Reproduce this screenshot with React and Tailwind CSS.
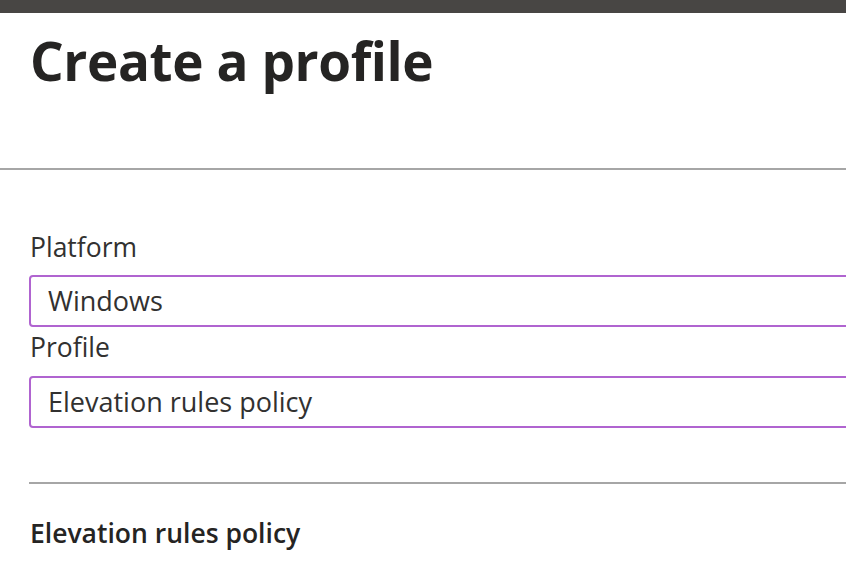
export default function App() {
  const font = { fontFamily: '"Open Sans", "Noto Sans", sans-serif' };
  return (
    <div className="w-[846px] h-[564px] overflow-hidden bg-white text-[#323130]" style={font}>
      <div className="h-[13px] bg-[#484644]" />
      <h1 className="mt-[21px] px-[30px] text-[53px] leading-[54px] font-bold text-[#252423] whitespace-nowrap tracking-[-0.4px]">
        Create a profile
      </h1>
      <div className="mt-[80px] h-[2px] bg-[#a6a6a6]" />
      <div className="pl-[29px] mr-[-60px]">
        <div className="mt-[59px] pl-px text-[26.5px] leading-[36px]">Platform</div>
        <div className="mt-[10px] h-[52px] flex items-center rounded-[4px] border-2 border-[#b064d0] pl-[17px] text-[27px] leading-[36px]">
          Windows
        </div>
        <div className="mt-[2px] pl-px text-[26.5px] leading-[36px]">Profile</div>
        <div className="mt-[11px] h-[52px] flex items-center rounded-[4px] border-2 border-[#b064d0] pl-[17px] text-[27px] leading-[36px]">
          Elevation rules policy
        </div>
        <div className="mt-[54px] h-[2px] bg-[#a6a6a6]" />
        <div className="mt-[32px] pl-px text-[26.5px] leading-[34px] font-semibold text-[#252423]">
          Elevation rules policy
        </div>
      </div>
    </div>
  );
}
